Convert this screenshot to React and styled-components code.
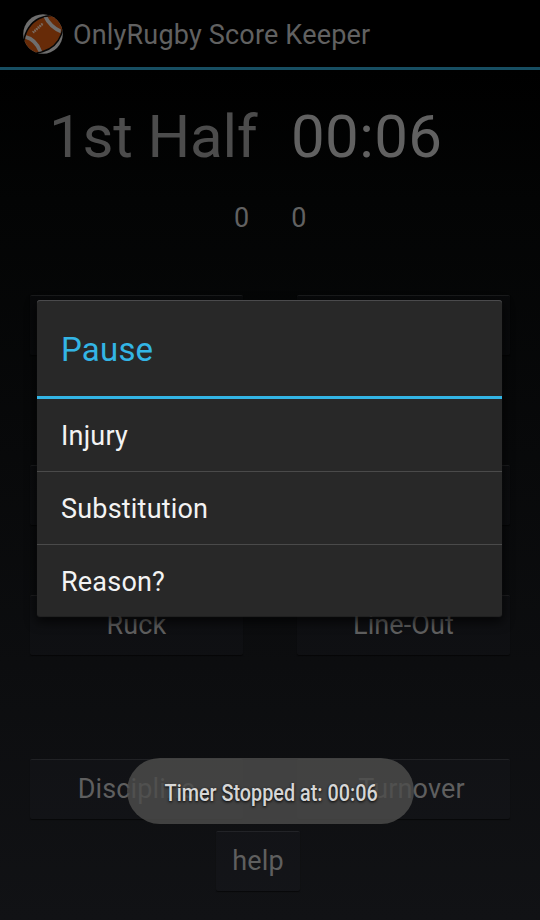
import React from "react";
import styled, { createGlobalStyle } from "styled-components";

const Global = createGlobalStyle`
  * { box-sizing: border-box; }
  body { margin: 0; background: #000; font-family: Roboto, "Liberation Sans", sans-serif; }
`;

const Screen = styled.div`
  position: relative;
  width: 540px;
  height: 920px;
  overflow: hidden;
  display: flex;
  flex-direction: column;
  background: linear-gradient(#000 0, #000 70px, #030404 200px, #111215 920px);
  font-size: 27px;
  line-height: 32px;
  color: #616161;
  white-space: nowrap;
`;

const ActionBar = styled.header`
  display: flex;
  align-items: center;
  gap: 10px;
  height: 70px;
  flex: none;
  padding: 1px 0 0 23px;
  background: #000;
  border-bottom: 3px solid #174e62;
`;

const Logo = styled.svg`
  width: 40px;
  height: 40px;
  flex: none;
`;

const AppTitle = styled.h1`
  margin: 0;
  padding-top: 2px;
  font-size: 27px;
  font-weight: 400;
  letter-spacing: 0.18px;
`;

const Scoreboard = styled.section`
  display: flex;
  flex-direction: column;
  flex: none;
  height: 225px;
`;

const ClockRow = styled.div`
  display: flex;
  padding: 32px 0 0 49px;
  font-size: 60px;
  line-height: 70px;
`;

const Period = styled.span`
  width: 242px;
  color: #4c4c4c;
  letter-spacing: -0.2px;
`;

const Clock = styled.span`
  letter-spacing: 0.4px;
`;

const ScoreRow = styled.div`
  display: flex;
  gap: 42px;
  padding: 30px 0 0 234px;
`;

const Controls = styled.main`
  display: flex;
  flex-direction: column;
  flex: none;
  padding: 0 30px;
`;

const ButtonRow = styled.div`
  display: flex;
  justify-content: ${(p) => (p.$center ? "center" : "space-between")};
  margin-bottom: ${(p) => p.$after || 0}px;
  padding-right: ${(p) => (p.$center ? 24 : 0)}px;
`;

const HoloButton = styled.button`
  width: ${(p) => p.$w || 213}px;
  height: 60px;
  padding: 0 0 1px ${(p) => p.$indent || 0}px;
  border: 0;
  border-top: 1px solid rgba(255, 255, 255, 0.07);
  border-radius: 2px;
  background: rgba(160, 190, 210, 0.025);
  box-shadow: 0 1px 1px rgba(0, 0, 0, 0.55);
  color: #5f5f5f;
  font: 400 27px/32px Roboto, "Liberation Sans", sans-serif;
  letter-spacing: 0.12px;
`;

const Dialog = styled.div`
  position: absolute;
  left: 37px;
  top: 300px;
  width: 465px;
  height: 316px;
  border-radius: 3px;
  background: #282828;
  box-shadow: inset 0 1px #4a4a4c, 0 1px 1px rgba(50, 50, 50, 0.7), 0 5px 11px 1px rgba(0, 0, 0, 0.7);
  color: #f3f3f3;
`;

const DialogTitle = styled.h2`
  margin: 0;
  height: 99px;
  padding: 30px 24px 0;
  border-bottom: 3px solid #33b5e5;
  color: #33b5e5;
  font-size: 33px;
  line-height: 40px;
  font-weight: 400;
  letter-spacing: 0.2px;
`;

const Option = styled.div`
  height: 73px;
  padding: 21px 24px 0;
  border-bottom: 1px solid #4a4a4a;
  letter-spacing: 0.2px;
  &:last-child { height: 72px; border-bottom: 0; }
`;

const Toast = styled.div`
  position: absolute;
  left: 127px;
  top: 758px;
  width: 287px;
  height: 66px;
  border-radius: 33px;
  display: flex;
  justify-content: center;
  padding: 20px 0 0 1px;
  background: rgba(77, 77, 76, 0.82);
`;

const ToastText = styled.span`
  font-size: 24px;
  line-height: 30px;
  font-weight: 500;
  color: #d6d6d6;
  text-shadow: 0 1px 3px #000;
  transform: scaleX(0.825);
`;

function Football() {
  return (
    <Logo viewBox="0 0 40 40">
      <defs>
        <clipPath id="disc"><circle cx="20" cy="20" r="19.8" /></clipPath>
        <clipPath id="ball"><path d="M2 27C3 17 8 9 16 5C22 2.500 30 1.500 34 5C38 9 39 15 37 21C34 29 28 34 20 37C13 39 6 38 3.500 34Z" /></clipPath>
      </defs>
      <g clipPath="url(#disc)">
        <rect width="40" height="40" fill="#6e6e6e" />
        <path d="M1 27C2 17 8 8.500 16 4.500C22 2 30 0 35 3C41 8 41 14 38 21C35 29 28 35 20 37.500C13 40 5 40 2 35Z" fill="#672b08" stroke="#070707" strokeWidth="1.5" />
        <g clipPath="url(#ball)" fill="none" stroke="#6e6e6e" strokeWidth="3.7">
          <path d="M1 22.500Q13 25 17.500 38" />
          <path d="M22 2Q27 13 39 18" />
        </g>
        <path d="M10 18.500L20 9.500" stroke="#74533e" strokeWidth="1.1" />
        <path d="M10 18.500L20 9.500" stroke="#7b6e64" strokeWidth="2.8" strokeDasharray="1.1 1.2" />
      </g>
    </Logo>
  );
}

export default function App() {
  return (
    <>
      <Global />
      <Screen>
        <ActionBar>
          <Football />
          <AppTitle>OnlyRugby Score Keeper</AppTitle>
        </ActionBar>
        <Scoreboard>
          <ClockRow>
            <Period>1st Half</Period>
            <Clock>00:06</Clock>
          </ClockRow>
          <ScoreRow>
            <span>0</span>
            <span>0</span>
          </ScoreRow>
        </Scoreboard>
        <Controls>
          <ButtonRow $after={110}>
            <HoloButton />
            <HoloButton />
          </ButtonRow>
          <ButtonRow $after={70}>
            <HoloButton />
            <HoloButton />
          </ButtonRow>
          <ButtonRow $after={104}>
            <HoloButton>Ruck</HoloButton>
            <HoloButton>Line-Out</HoloButton>
          </ButtonRow>
          <ButtonRow $after={12}>
            <HoloButton>Discipline</HoloButton>
            <HoloButton $indent={16}>Turnover</HoloButton>
          </ButtonRow>
          <ButtonRow $center>
            <HoloButton $w={84}>help</HoloButton>
          </ButtonRow>
        </Controls>
        <Dialog>
          <DialogTitle>Pause</DialogTitle>
          <Option>Injury</Option>
          <Option>Substitution</Option>
          <Option>Reason?</Option>
        </Dialog>
        <Toast>
          <ToastText>Timer Stopped at: 00:06</ToastText>
        </Toast>
      </Screen>
    </>
  );
}
